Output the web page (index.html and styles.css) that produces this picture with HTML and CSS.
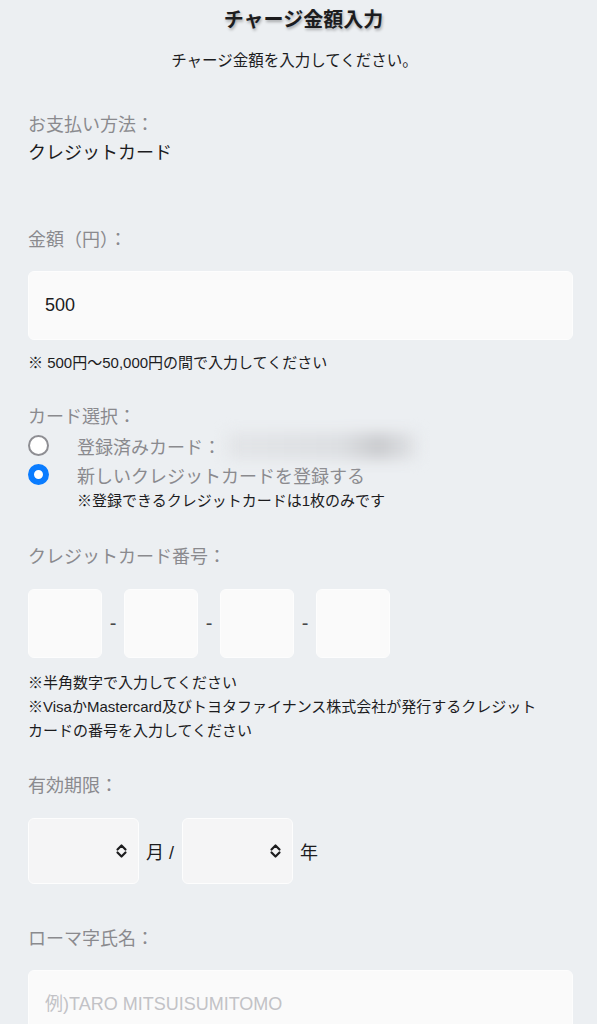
FILE: index.html
```html
<!DOCTYPE html>
<html lang="ja">
<head>
    <meta charset="UTF-8">
    <meta name="viewport" content="width=device-width, initial-scale=1.0">
    <title>チャージ金額入力</title>
    <link rel="stylesheet" href="styles.css">
</head>
<body>
    <div class="page">
        <h1 class="title">チャージ金額入力</h1>
        <p class="lead">チャージ金額を入力してください。</p>

        <div class="field pay-method">
            <div class="label">お支払い方法：</div>
            <div class="value">クレジットカード</div>
        </div>

        <div class="field amount">
            <div class="label">金額（円）：</div>
            <input class="text-input" type="text" value="500">
            <p class="note">※ 500円～50,000円の間で入力してください</p>
        </div>

        <div class="field card-select">
            <div class="label">カード選択：</div>
            <label class="radio-row">
                <span class="radio"></span>
                <span class="radio-text">登録済みカード：</span>
                <span class="masked"></span>
            </label>
            <label class="radio-row">
                <span class="radio checked"></span>
                <span class="radio-text">新しいクレジットカードを登録する</span>
            </label>
            <p class="note indent">※登録できるクレジットカードは1枚のみです</p>
        </div>

        <div class="field card-number">
            <div class="label">クレジットカード番号：</div>
            <div class="number-row">
                <input class="num-box" type="text">
                <span class="dash">-</span>
                <input class="num-box" type="text">
                <span class="dash">-</span>
                <input class="num-box" type="text">
                <span class="dash">-</span>
                <input class="num-box" type="text">
            </div>
            <p class="note">※半角数字で入力してください</p>
            <p class="note">※VisaかMastercard及びトヨタファイナンス株式会社が発行するクレジット<br>カードの番号を入力してください</p>
        </div>

        <div class="field expiry">
            <div class="label">有効期限：</div>
            <div class="expiry-row">
                <div class="select">
                    <svg width="13" height="16" viewBox="0 0 13 16"><path d="M2.5 6.5 L6.5 2.5 L10.5 6.5 M2.5 9.5 L6.5 13.5 L10.5 9.5" fill="none" stroke="#1c1c1e" stroke-width="2.2" stroke-linecap="round" stroke-linejoin="round"/></svg>
                </div>
                <span class="unit">月 /</span>
                <div class="select">
                    <svg width="13" height="16" viewBox="0 0 13 16"><path d="M2.5 6.5 L6.5 2.5 L10.5 6.5 M2.5 9.5 L6.5 13.5 L10.5 9.5" fill="none" stroke="#1c1c1e" stroke-width="2.2" stroke-linecap="round" stroke-linejoin="round"/></svg>
                </div>
                <span class="unit">年</span>
            </div>
        </div>

        <div class="field name">
            <div class="label">ローマ字氏名：</div>
            <input class="text-input" type="text" placeholder="例)TARO MITSUISUMITOMO">
        </div>
    </div>
</body>
</html>
```

FILE: styles.css
```css
body {
    margin: 0;
    background: #eceff2;
    font-family: "Liberation Sans", "Noto Sans CJK JP", sans-serif;
    color: #1c1c1e;
}

.page {
    padding: 6px 24px 40px 28px;
}

.title {
    margin: 0;
    font-size: 20px;
    line-height: 28px;
    font-weight: bold;
    text-align: center;
    padding-left: 6px;
    text-shadow: 1px 2px 3px rgba(0, 0, 0, 0.3);
}

.lead {
    margin: 15px 0 0;
    font-size: 15.5px;
    line-height: 24px;
    text-align: center;
    padding-right: 12px;
}

.label {
    font-size: 18px;
    line-height: 28px;
    color: #8a8a8e;
}

.value {
    font-size: 18px;
    line-height: 28px;
}

.pay-method {
    margin-top: 38px;
}

.amount {
    margin-top: 59px;
}

.text-input {
    display: block;
    box-sizing: border-box;
    width: 100%;
    height: 69px;
    margin-top: 17px;
    padding: 0 16px;
    background: #fafafa;
    border: 1.5px solid #fdfdfd;
    border-radius: 6px;
    font-family: inherit;
    font-size: 18px;
    color: #1c1c1e;
    outline: none;
}

.text-input::placeholder {
    color: #c2c2c6;
}

.note {
    margin: 0;
    font-size: 15px;
    line-height: 24px;
}

.amount .note {
    margin-top: 11px;
}

.card-select {
    margin-top: 28px;
}

.radio-row {
    display: flex;
    align-items: center;
    height: 29px;
}

.radio {
    box-sizing: border-box;
    width: 21px;
    height: 21px;
    border-radius: 50%;
    border: 2px solid #8e8e93;
    background: #fff;
    flex-shrink: 0;
}

.radio.checked {
    border: 6.5px solid #0a7cff;
}

.radio-text {
    margin-left: 28px;
    font-size: 18px;
    color: #8a8a8e;
}

.masked {
    display: inline-block;
    width: 190px;
    height: 26px;
    margin-left: 6px;
    background: linear-gradient(90deg, #e3e5e8 0%, #dcdee1 60%, #c9cacd 80%, #e3e5e8 100%);
    filter: blur(7px);
}

.note.indent {
    margin-left: 49px;
}

.card-number {
    margin-top: 30px;
}

.number-row {
    display: flex;
    align-items: center;
    margin: 18px 0 13px;
}

.num-box {
    box-sizing: border-box;
    width: 74px;
    height: 69px;
    background: #fafafa;
    border: 1.5px solid #fdfdfd;
    border-radius: 6px;
    outline: none;
}

.dash {
    width: 22px;
    text-align: center;
    font-size: 20px;
    color: #48484a;
}

.expiry {
    margin-top: 29px;
}

.expiry-row {
    display: flex;
    align-items: center;
    margin-top: 18px;
}

.select {
    box-sizing: border-box;
    width: 111px;
    height: 66px;
    display: flex;
    align-items: center;
    justify-content: flex-end;
    padding-right: 10px;
    background: #f5f5f6;
    border: 1.5px solid #fdfdfd;
    border-radius: 6px;
}

.unit {
    font-size: 18px;
    margin: 0 8px 0 7px;
}

.name {
    margin-top: 41px;
}
```
